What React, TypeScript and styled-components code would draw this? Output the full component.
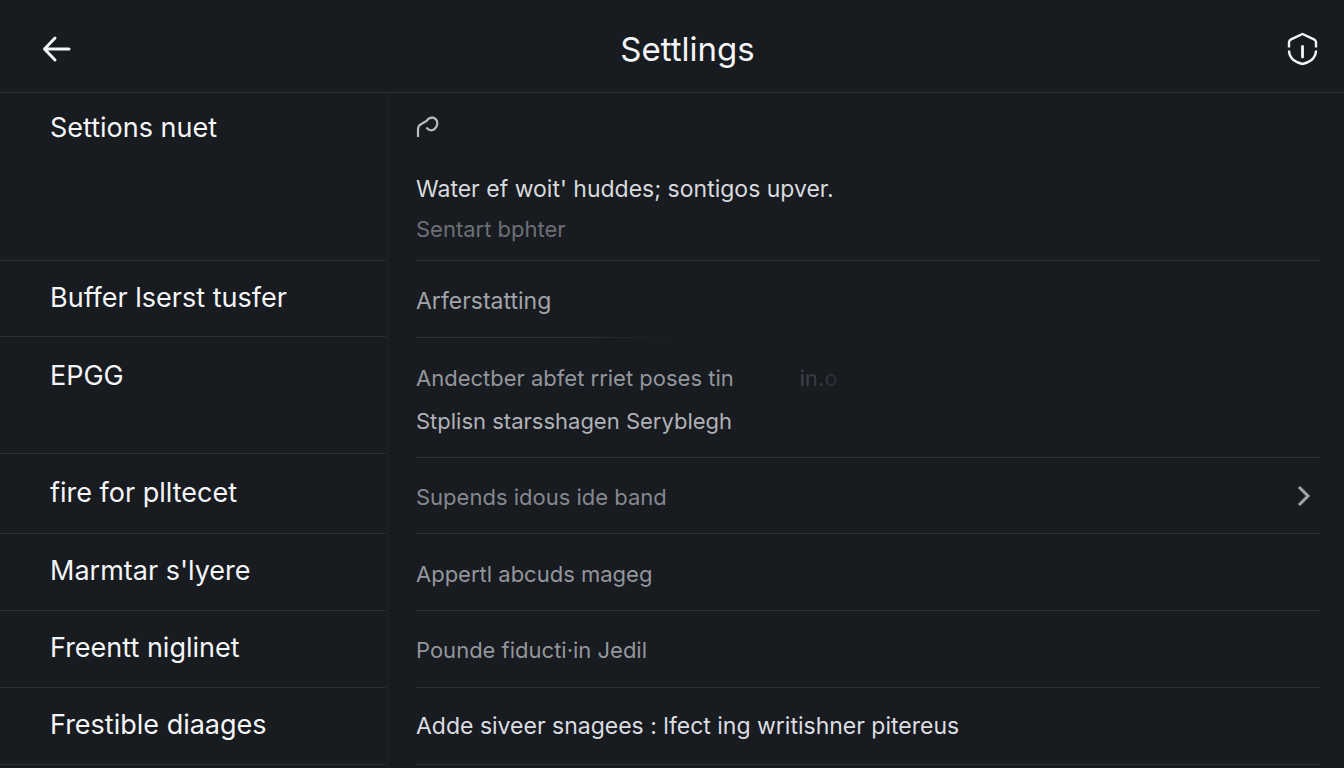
import React from "react";
import styled, { createGlobalStyle } from "styled-components";

const GlobalStyle = createGlobalStyle`
  * { box-sizing: border-box; }
  body {
    margin: 0;
    background: #181b20;
    color: #f4f5f7;
    font-family: Inter, "Liberation Sans", sans-serif;
  }
`;

const LINE = "#2b2e33";

const Page = styled.div`
  min-height: 100vh;
  display: flex;
  flex-direction: column;
`;

const Header = styled.header`
  display: flex;
  align-items: center;
  height: 93px;
  padding: 6px 20px 0 35px;
  border-bottom: 1px solid ${LINE};
`;

const IconButton = styled.button<{ $width: number; $align?: string }>`
  display: flex;
  align-items: center;
  justify-content: ${(p) => p.$align ?? "center"};
  width: ${(p) => p.$width}px;
  height: 44px;
  padding: 0 6px;
  border: 0;
  background: none;
  color: #f4f5f7;
  cursor: pointer;
`;

const Title = styled.h1`
  flex: 1;
  margin: 0;
  text-align: center;
  font-size: 33px;
  font-weight: 400;
  line-height: 40px;
`;

const Body = styled.div`
  flex: 1;
  display: flex;
`;

const Sidebar = styled.nav`
  flex: 0 0 388px;
  padding-right: 1px;
  border-right: 1px solid #202328;
`;

const NavItem = styled.a<{ $height: number; $top: number }>`
  display: block;
  min-height: ${(p) => p.$height}px;
  padding: ${(p) => p.$top}px 24px 0 50px;
  border-bottom: 1px solid ${LINE};
  color: #f4f5f7;
  font-size: 27px;
  line-height: 34px;
  text-decoration: none;
`;

const Content = styled.main`
  flex: 1;
  min-width: 0;
  padding: 0 24px 0 28px;
`;

const Row = styled.section<{ $height: number; $top?: number; $short?: boolean }>`
  display: flex;
  justify-content: space-between;
  min-height: ${(p) => p.$height}px;
  padding-top: ${(p) => p.$top ?? 20}px;
  background: ${(p) =>
    p.$short
      ? `linear-gradient(90deg, ${LINE} 70%, transparent) left bottom / 250px 1px no-repeat`
      : `linear-gradient(${LINE}, ${LINE}) left bottom / 100% 1px no-repeat`};
`;

const Lines = styled.div<{ $gap: number }>`
  display: flex;
  flex-direction: column;
  gap: ${(p) => p.$gap}px;
`;

const Mark = styled.div`
  height: 56px;
  padding-top: 3px;
`;

const Text = styled.p<{ $color: string; $large?: boolean }>`
  margin: 0;
  color: ${(p) => p.$color};
  font-size: ${(p) => (p.$large ? 23 : 22)}px;
  line-height: 40px;
`;

const Pair = styled.div`
  display: flex;
  gap: 66px;
`;

const Faded = styled(Text)`
  background: linear-gradient(90deg, #44474e, #2a2d33);
  background-clip: text;
`;

const OpenButton = styled(IconButton)`
  color: #a2a4a9;
  height: 38px;
`;

const navItems = [
  { label: "Settions nuet", height: 168, top: 18 },
  { label: "Buffer lserst tusfer", height: 76, top: 20 },
  { label: "EPGG", height: 117, top: 22 },
  { label: "fire for plltecet", height: 80, top: 22 },
  { label: "Marmtar s'lyere", height: 77, top: 20 },
  { label: "Freentt niglinet", height: 77, top: 20 },
  { label: "Frestible diaages", height: 77, top: 20 },
];

export default function App() {
  return (
    <Page>
      <GlobalStyle />
      <Header>
        <IconButton $width={60} $align="flex-start" aria-label="Back">
          <svg width="30" height="28" viewBox="0 0 30 28" fill="none" stroke="currentColor" strokeWidth="3" strokeLinecap="round" strokeLinejoin="round">
            <path d="M14 3 3.500 14 14 25M4 14H28" />
          </svg>
        </IconButton>
        <Title>Settlings</Title>
        <IconButton $width={44} aria-label="Information">
          <svg width="32" height="34" viewBox="0 0 32 34" fill="none" stroke="currentColor" strokeWidth="2.400">
            <path d="M3 15.500V10Q3.300 8.200 5 7.400L16.500 2 28 7.400Q29.700 8.200 30 10V15.500" />
            <path d="M3 18.500Q3.200 24.500 7.500 28 11.500 31 16.500 32 21.500 31 25.500 28 29.800 24.500 30 18.500" />
            <path d="M16.500 14.500V25" strokeWidth="2.800" strokeLinecap="round" />
          </svg>
        </IconButton>
      </Header>
      <Body>
        <Sidebar aria-label="Settings sections">
          {navItems.map((item) => (
            <NavItem key={item.label} href="#" $height={item.height} $top={item.top}>
              {item.label}
            </NavItem>
          ))}
        </Sidebar>
        <Content>
          <Row $height={168}>
            <Lines $gap={0}>
              <Mark>
                <svg width="24" height="22" viewBox="0 0 24 22" fill="none" stroke="#b9bbc0" strokeWidth="2.200" strokeLinejoin="round">
                  <path d="M2 21V13.500Q2 10 4.500 8.500L10.500 5Q13 1 17 1.600 21.500 2.800 21.300 8 20.300 13 16 14.300 12.500 14.500 10.500 11.500" />
                </svg>
              </Mark>
              <Text $color="#d8dade" $large>
                Water ef woit' huddes; sontigos upver.
              </Text>
              <Text $color="#6c6f75">Sentart bphter</Text>
            </Lines>
          </Row>
          <Row $height={77} $short>
            <Text $color="#a2a4a9" $large>
              Arferstatting
            </Text>
          </Row>
          <Row $height={120}>
            <Lines $gap={3}>
              <Pair>
                <Text $color="#93969c">Andectber abfet rriet poses tin</Text>
                <Faded $color="transparent">in.o</Faded>
              </Pair>
              <Text $color="#b0b2b7">Stplisn starsshagen Seryblegh</Text>
            </Lines>
          </Row>
          <Row $height={76} $top={19}>
            <Text $color="#85888f">Supends idous ide band</Text>
            <OpenButton $width={34} aria-label="Open">
              <svg width="16" height="24" viewBox="0 0 16 24" fill="none" stroke="currentColor" strokeWidth="3">
                <path d="M4 3 13 12 4 21" />
              </svg>
            </OpenButton>
          </Row>
          <Row $height={77}>
            <Text $color="#93969c">Appertl abcuds mageg</Text>
          </Row>
          <Row $height={77} $top={19}>
            <Text $color="#93969c">Pounde fiducti·in Jedil</Text>
          </Row>
          <Row $height={77} $top={18}>
            <Text $color="#dcdee1" $large>
              Adde siveer snagees : lfect ing writishner pitereus
            </Text>
          </Row>
        </Content>
      </Body>
    </Page>
  );
}
